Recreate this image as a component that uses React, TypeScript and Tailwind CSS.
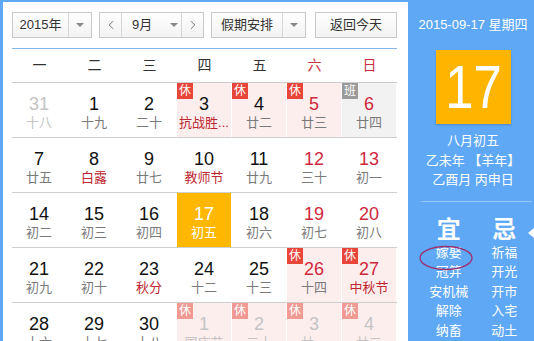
import { ChevronLeft, ChevronRight } from 'lucide-react';

type Day = {
  d: number;
  l: string;
  dim?: boolean;
  we?: boolean;
  fest?: boolean;
  badge?: '休' | '班';
  bg?: 'pink' | 'grey';
  today?: boolean;
};

const weeks: Day[][] = [
  [
    { d: 31, l: '十八', dim: true },
    { d: 1, l: '十九' },
    { d: 2, l: '二十' },
    { d: 3, l: '抗战胜...', fest: true, badge: '休', bg: 'pink' },
    { d: 4, l: '廿二', badge: '休', bg: 'pink' },
    { d: 5, l: '廿三', we: true, badge: '休', bg: 'pink' },
    { d: 6, l: '廿四', we: true, badge: '班', bg: 'grey' },
  ],
  [
    { d: 7, l: '廿五' },
    { d: 8, l: '白露', fest: true },
    { d: 9, l: '廿七' },
    { d: 10, l: '教师节', fest: true },
    { d: 11, l: '廿九' },
    { d: 12, l: '三十', we: true },
    { d: 13, l: '初一', we: true },
  ],
  [
    { d: 14, l: '初二' },
    { d: 15, l: '初三' },
    { d: 16, l: '初四' },
    { d: 17, l: '初五', today: true },
    { d: 18, l: '初六' },
    { d: 19, l: '初七', we: true },
    { d: 20, l: '初八', we: true },
  ],
  [
    { d: 21, l: '初九' },
    { d: 22, l: '初十' },
    { d: 23, l: '秋分', fest: true },
    { d: 24, l: '十二' },
    { d: 25, l: '十三' },
    { d: 26, l: '十四', we: true, badge: '休', bg: 'pink' },
    { d: 27, l: '中秋节', we: true, fest: true, badge: '休', bg: 'pink' },
  ],
  [
    { d: 28, l: '十六' },
    { d: 29, l: '十七' },
    { d: 30, l: '十八' },
    { d: 1, l: '国庆节', dim: true, badge: '休', bg: 'pink' },
    { d: 2, l: '二十', dim: true, badge: '休', bg: 'pink' },
    { d: 3, l: '廿一', dim: true, badge: '休', bg: 'pink' },
    { d: 4, l: '廿二', dim: true, badge: '休', bg: 'pink' },
  ],
];

const heads = ['一', '二', '三', '四', '五', '六', '日'];
const yi = ['嫁娶', '冠笄', '安机械', '解除', '纳畜'];
const ji = ['祈福', '开光', '开市', '入宅', '动土'];

function Caret() {
  return <span className="block w-0 h-0 border-x-[4px] border-x-transparent border-t-[4px] border-t-[#888]" />;
}

const box = 'h-[26px] flex border border-[#c9c9c9] bg-gradient-to-b from-white to-[#f2f2f2] text-[13px] text-[#333] whitespace-nowrap';

function Cell({ day }: { day: Day }) {
  let bg = '';
  if (day.today) bg = 'bg-[#ffb700]';
  else if (day.bg === 'pink') bg = 'bg-[#fdeeee]';
  else if (day.bg === 'grey') bg = 'bg-[#f2f2f2]';

  let num = 'text-[#111]';
  if (day.today) num = 'text-white';
  else if (day.dim) num = 'text-[#c4c4c4]';
  else if (day.we) num = 'text-[#d0283c]';

  let lun = 'text-[#7a7a7a]';
  if (day.today) lun = 'text-white';
  else if (day.dim) lun = 'text-[#c4c4c4]';
  else if (day.fest) lun = 'text-[#bd2630]';
  else if (day.d === 31) lun = 'text-[#9a9a9a]';

  return (
    <div className="w-[55px] h-[54px] pr-[1px]">
      <div className={`relative h-full flex flex-col items-center pt-[11px] ${bg}`}>
        {day.badge && (
          <span
            className={`absolute top-0 left-0 w-[16px] h-[16px] text-center text-[12px] leading-[16px] text-white ${
              day.badge === '班' ? 'bg-[#9b9b9b]' : day.dim ? 'bg-[#f19a94]' : 'bg-[#e8463a]'
            }`}
          >
            {day.badge}
          </span>
        )}
        <span className={`text-[18px] leading-[20px] ${num}`}>{day.d}</span>
        <span className={`mt-[2px] text-[13px] leading-[14px] whitespace-nowrap ${lun}`}>{day.l}</span>
      </div>
    </div>
  );
}

export default function App() {
  return (
    <div className="w-[534px] h-[341px] overflow-hidden flex border-l-[3px] border-t-[2px] border-[#5ea8f5] bg-white font-['Liberation_Sans','Noto_Sans_CJK_SC',sans-serif]">
      <div className="w-[405px] shrink-0 pl-[9px]">
        <div className="w-[385px]">
          <div className="mt-[10px] flex items-center">
            <div className={`${box} w-[80px]`}>
              <span className="w-[56px] flex items-center justify-center border-r border-[#d6d6d6]">2015年</span>
              <span className="flex-1 flex items-center justify-center"><Caret /></span>
            </div>
            <div className={`${box} w-[105px] ml-[7px]`}>
              <span className="w-[22px] flex items-center justify-center border-r border-[#d6d6d6] text-[#555]">
                <ChevronLeft size={14} strokeWidth={1.4} />
              </span>
              <span className="flex-1 flex items-center pl-[10px] gap-[18px]">
                <span>9月</span>
                <Caret />
              </span>
              <span className="w-[22px] flex items-center justify-center border-l border-[#d6d6d6] text-[#555]">
                <ChevronRight size={14} strokeWidth={1.4} />
              </span>
            </div>
            <div className={`${box} w-[95px] ml-[7px]`}>
              <span className="w-[71px] flex items-center justify-center border-r border-[#d6d6d6]">假期安排</span>
              <span className="flex-1 flex items-center justify-center"><Caret /></span>
            </div>
            <div className={`${box} w-[82px] ml-[9px] items-center justify-center`}>返回今天</div>
          </div>
          <div className="mt-[10px] h-px bg-[#86b5ea]" />
          <div className="h-[34px] flex border-b border-[#cccccc]">
            {heads.map((h, i) => (
              <div
                key={h}
                className={`w-[55px] flex items-center justify-center text-[14px] ${i > 4 ? 'text-[#c8303f]' : 'text-[#333]'}`}
              >
                {h}
              </div>
            ))}
          </div>
          {weeks.map((w, i) => (
            <div key={i} className="flex border-b border-[#cfcfcf]">
              {w.map((d, j) => (
                <Cell key={j} day={d} />
              ))}
            </div>
          ))}
        </div>
      </div>

      <div className="relative flex-1 bg-[#5ea8f5] text-white flex flex-col items-center pl-[4px]">
        <div className="pt-[13px] text-[13px] leading-[20px] whitespace-nowrap">2015-09-17 星期四</div>
        <div className="mt-[15px] w-[75px] h-[74px] bg-[#ffb500] shadow-[0_1px_2px_rgba(0,0,0,0.2)] flex items-center justify-center">
          <span className="text-[62px] leading-none scale-x-[0.82]">17</span>
        </div>
        <div className="mt-[7px] text-[13px] leading-[19.5px] text-center whitespace-nowrap">
          <div>八月初五</div>
          <div>乙未年 【羊年】</div>
          <div>乙酉月 丙申日</div>
        </div>
        <div className="mt-[11px] self-start ml-[9px] w-[111px] h-px bg-[#93c5f8]" />
        <div className="mt-[15px] self-start ml-[9px] w-[111px] grid grid-cols-2 text-center">
          <div>
            <div className="text-[24px] leading-[26px] font-bold">宜</div>
            {yi.map((t) => (
              <div key={t} className="text-[13px] leading-[19.5px]">{t}</div>
            ))}
          </div>
          <div>
            <div className="text-[24px] leading-[26px] font-bold">忌</div>
            {ji.map((t) => (
              <div key={t} className="text-[13px] leading-[19.5px]">{t}</div>
            ))}
          </div>
        </div>
        <svg className="absolute left-[10px] top-[243px]" width="56" height="26" viewBox="0 0 56 26">
          <ellipse cx="28" cy="13" rx="26" ry="11.5" fill="none" stroke="#9a2f6e" strokeWidth="1.3" />
        </svg>
        <span className="absolute right-0 top-[226px] w-0 h-0 border-y-[5px] border-y-transparent border-r-[6px] border-r-white" />
      </div>
    </div>
  );
}
